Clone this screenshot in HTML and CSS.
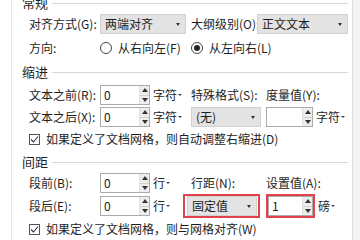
FILE: index.html
```html
<!DOCTYPE html>
<html lang="zh-CN">
<head>
  <meta charset="UTF-8" />
  <title>段落</title>
  <link rel="stylesheet" href="styles.css">
</head>
<body>
  <div class="frame">
    <div class="panel">
      <!-- 常规 -->
      <div class="grp-title t1"><span>常规</span></div>
      <div class="row ra">
        <span class="lbl c1">对齐方式(G):</span>
        <div class="sel w86"><span>两端对齐</span><i class="caret"></i></div>
        <span class="lbl c2a">大纲级别(O):</span>
        <div class="sel w91"><span>正文文本</span><i class="caret"></i></div>
      </div>
      <div class="row rb">
        <span class="lbl c1">方向:</span>
        <label class="radio-item w91"><i class="radio"></i>从右向左(F)</label>
        <label class="radio-item"><i class="radio on"></i>从左向右(L)</label>
      </div>

      <!-- 缩进 -->
      <div class="grp-title t2"><span>缩进</span></div>
      <div class="row rc">
        <span class="lbl c1">文本之前(R):</span>
        <div class="spin w50"><span class="val">0</span><span class="btns"><i class="up"></i><i class="dn"></i></span></div>
        <span class="unit u-wide">字符<i class="mini"></i></span>
        <span class="lbl c3">特殊格式(S):</span>
        <span class="lbl">度量值(Y):</span>
      </div>
      <div class="row rd">
        <span class="lbl c1">文本之后(X):</span>
        <div class="spin w50"><span class="val">0</span><span class="btns"><i class="up"></i><i class="dn"></i></span></div>
        <span class="unit u-wide">字符<i class="mini"></i></span>
        <div class="sel w70"><span>(无)</span><i class="caret"></i></div>
        <div class="spin w47 ml5"><span class="val"></span><span class="btns"><i class="up"></i><i class="dn"></i></span></div>
        <span class="unit">字符<i class="mini"></i></span>
      </div>
      <div class="row re">
        <label class="check-item"><i class="check"><svg width="9" height="9" viewBox="0 0 9 9"><polyline points="1,4.5 3.5,7 8,1.5" fill="none" stroke="#333" stroke-width="1.1"/></svg></i>如果定义了文档网格，则自动调整右缩进(D)</label>
      </div>

      <!-- 间距 -->
      <div class="grp-title t3"><span>间距</span></div>
      <div class="row rf">
        <span class="lbl c1">段前(B):</span>
        <div class="spin w50"><span class="val">0</span><span class="btns"><i class="up"></i><i class="dn"></i></span></div>
        <span class="unit u-row">行<i class="mini"></i></span>
        <span class="lbl c3b">行距(N):</span>
        <span class="lbl">设置值(A):</span>
      </div>
      <div class="row rg">
        <span class="lbl c1">段后(E):</span>
        <div class="spin w50"><span class="val">0</span><span class="btns"><i class="up"></i><i class="dn"></i></span></div>
        <span class="unit u-row">行<i class="mini"></i></span>
        <div class="hl hl-sel"><div class="sel w70"><span>固定值</span><i class="caret"></i></div></div>
        <div class="hl hl-spin"><div class="spin w45"><span class="val">1</span><span class="btns"><i class="up"></i><i class="dn"></i></span></div></div>
        <span class="unit">磅<i class="mini"></i></span>
      </div>
      <div class="row rh">
        <label class="check-item"><i class="check"><svg width="9" height="9" viewBox="0 0 9 9"><polyline points="1,4.5 3.5,7 8,1.5" fill="none" stroke="#333" stroke-width="1.1"/></svg></i>如果定义了文档网格，则与网格对齐(W)</label>
      </div>
    </div>
    <div class="side"></div>
  </div>
</body>
</html>
```

FILE: styles.css
```css
* {
  margin: 0;
  padding: 0;
  box-sizing: border-box;
}
body {
  width: 360px;
  height: 240px;
  overflow: hidden;
  background: #fff;
  font-family: "Noto Sans CJK SC", "Microsoft YaHei", sans-serif;
  font-size: 12px;
  color: #1e1e1e;
}
.frame {
  display: flex;
  height: 240px;
}
.panel {
  width: 341px;
  margin-left: 11px;
  border-left: 1px solid #e6e6e6;
  padding-left: 10px;
  padding-right: 4px;
}
.side {
  flex: 1;
  background: #f3f3f3;
  border-left: 1px solid #dcdcdc;
}

/* group headers */
.grp-title {
  display: flex;
  align-items: center;
  height: 14px;
  line-height: 14px;
  font-size: 13px;
}
.grp-title::after {
  content: "";
  flex: 1;
  margin-left: 4px;
  border-top: 1px solid #d8d8d8;
}
.t1 { margin-top: -4px; }
.t2 { margin-top: 7px; }
.t3 { margin-top: 8px; }

/* rows */
.row {
  display: flex;
  align-items: center;
  height: 20px;
  padding-left: 7px;
  line-height: 16px;
  white-space: nowrap;
}
.ra { margin-top: 4px; }
.rb { margin-top: 4px; }
.rc { margin-top: 6px; }
.rd { margin-top: 2px; }
.re { margin-top: 4px; height: 16px; }
.rf { margin-top: 4px; }
.rg { margin-top: 1px; height: 24px; }
.rh { margin-top: 3px; height: 16px; }

.lbl { display: block; }
.c1 { width: 71px; }
.c2a { width: 66px; margin-left: 5px; }
.c3 { width: 75px; }
.c3b { width: 75px; margin-left: 8px; }
.w50 { width: 50px; }
.w47 { width: 47px; }
.w45 { width: 45px; }
.w70 { width: 70px; }
.w86 { width: 86px; }
.w91 { width: 91px; }
.ml5 { margin-left: 5px; }

/* dropdown */
.sel {
  display: flex;
  align-items: center;
  justify-content: space-between;
  height: 20px;
  padding: 0 5px 0 4px;
  background: #e3e3e3;
  border: 1px solid #d2d2d2;
}
.caret {
  width: 0;
  height: 0;
  border-left: 2.5px solid transparent;
  border-right: 2.5px solid transparent;
  border-top: 3px solid #333;
}

/* spinner */
.spin {
  display: flex;
  height: 20px;
  background: #fff;
  border: 1px solid #ababab;
}
.spin .val {
  flex: 1;
  padding-left: 3px;
  line-height: 18px;
}
.btns {
  width: 10px;
  display: flex;
  flex-direction: column;
  background: #ededed;
  border-left: 1px solid #e0e0e0;
}
.btns i {
  flex: 1;
  display: flex;
  align-items: center;
  justify-content: center;
}
.btns .up { border-bottom: 1px solid #cfcfcf; }
.btns i::before {
  content: "";
  width: 0;
  height: 0;
  border-left: 3px solid transparent;
  border-right: 3px solid transparent;
}
.btns .up::before { border-bottom: 4px solid #333; }
.btns .dn::before { border-top: 4px solid #333; }

.unit {
  display: flex;
  align-items: center;
  margin-left: 3px;
}
.u-wide { width: 38px; }
.u-row { width: 30px; }
.mini {
  width: 0;
  height: 0;
  margin-left: 1px;
  border-left: 2px solid transparent;
  border-right: 2px solid transparent;
  border-top: 2px solid #444;
}

/* radio + check */
.radio-item,
.check-item {
  display: flex;
  align-items: center;
}
.radio {
  width: 12px;
  height: 12px;
  margin-right: 6px;
  border: 1px solid #444;
  border-radius: 50%;
  display: flex;
  align-items: center;
  justify-content: center;
}
.radio.on::after {
  content: "";
  width: 6px;
  height: 6px;
  border-radius: 50%;
  background: #222;
}
.check {
  width: 11px;
  height: 11px;
  margin-right: 6px;
  border: 1px solid #555;
  display: flex;
  align-items: center;
  justify-content: center;
}

/* highlight boxes */
.hl {
  height: 24px;
  border: 2px solid #e0434b;
  display: flex;
  align-items: center;
}
.hl-sel {
  width: 77px;
  padding-left: 2px;
}
.hl-spin {
  width: 49px;
  margin-left: 6px;
}
.hl-spin .spin { border-color: #ababab; }
```
